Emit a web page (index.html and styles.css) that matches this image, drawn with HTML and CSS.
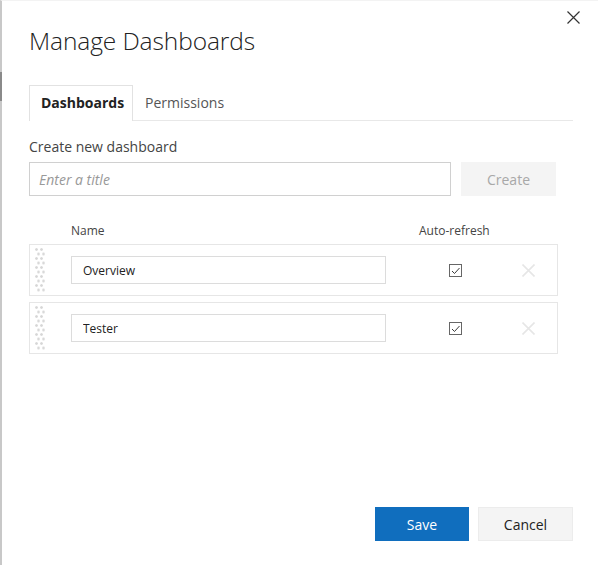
FILE: index.html
```html
<!DOCTYPE html>
<html>
<head>
<meta charset="utf-8">
<link rel="stylesheet" href="styles.css">
</head>
<body>
<div class="frame">
  <div class="scroll-thumb"></div>
  <button class="close" aria-label="Close">
    <svg width="13" height="13" viewBox="0 0 13 13"><path d="M0.5 0.5L12.5 12.5M12.5 0.5L0.5 12.5" stroke="#333" stroke-width="1.2" fill="none"/></svg>
  </button>
  <div class="dialog">
    <h1 class="title">Manage Dashboards</h1>
    <div class="tabs">
      <div class="tab active">Dashboards</div>
      <div class="tab">Permissions</div>
    </div>
    <div class="create-label">Create new dashboard</div>
    <div class="create-row">
      <input class="title-input" type="text" placeholder="Enter a title">
      <button class="btn-create">Create</button>
    </div>
    <div class="grid-head">
      <span class="col-name">Name</span>
      <span class="col-auto">Auto-refresh</span>
    </div>
    <div class="rows">
      <div class="row">
        <div class="grip"></div>
        <input class="name-input" type="text" value="Overview">
        <div class="check-cell">
          <span class="checkbox"><svg width="11" height="11" viewBox="0 0 11 11"><path d="M2 6L4.5 8.5L9.5 3" stroke="#3a3a3a" stroke-width="1" fill="none"/></svg></span>
        </div>
        <div class="del-cell">
          <svg width="13" height="13" viewBox="0 0 13 13"><path d="M0.5 0.5L12.5 12.5M12.5 0.5L0.5 12.5" stroke="#e6e6e6" stroke-width="1.6" fill="none"/></svg>
        </div>
      </div>
      <div class="row">
        <div class="grip"></div>
        <input class="name-input" type="text" value="Tester">
        <div class="check-cell">
          <span class="checkbox"><svg width="11" height="11" viewBox="0 0 11 11"><path d="M2 6L4.5 8.5L9.5 3" stroke="#3a3a3a" stroke-width="1" fill="none"/></svg></span>
        </div>
        <div class="del-cell">
          <svg width="13" height="13" viewBox="0 0 13 13"><path d="M0.5 0.5L12.5 12.5M12.5 0.5L0.5 12.5" stroke="#e6e6e6" stroke-width="1.6" fill="none"/></svg>
        </div>
      </div>
    </div>
    <div class="spacer"></div>
    <div class="footer">
      <button class="btn-save">Save</button>
      <button class="btn-cancel">Cancel</button>
    </div>
  </div>
</div>
</body>
</html>
```
FILE: styles.css
```css
* { box-sizing: border-box; }
html, body { margin: 0; padding: 0; background: #fff; }
body {
  font-family: "Open Sans", "Noto Sans", "Liberation Sans", sans-serif;
  color: #333;
  width: 598px;
  height: 565px;
  overflow: hidden;
}
.frame {
  position: relative;
  height: 565px;
  border-left: 2px solid #c8c8c8;
  border-top: 1px solid #f3f3f3;
}
.scroll-thumb {
  position: absolute;
  left: -2px;
  top: 71px;
  width: 2px;
  height: 29px;
  background: #8a8a8a;
}
.close {
  position: absolute;
  right: 18px;
  top: 10px;
  width: 13px;
  height: 13px;
  padding: 0;
  border: 0;
  background: none;
  display: flex;
}
.dialog {
  display: flex;
  flex-direction: column;
  height: 100%;
  padding: 0 25px 24px 27px;
}
.title {
  margin: 23px 0 0;
  font-weight: 300;
  font-size: 24.5px;
  line-height: 33px;
  color: #222;
  letter-spacing: -0.1px;
}
.tabs {
  display: flex;
  margin-top: 28px;
  border-bottom: 1px solid #e8e8e8;
  height: 36px;
}
.tab {
  padding: 0 11px;
  font-size: 14px;
  line-height: 34px;
  color: #555;
  border: 1px solid transparent;
  border-bottom: 0;
  margin-bottom: -1px;
}
.tab.active {
  font-weight: 700;
  color: #222;
  border-color: #e2e2e2;
  background: #fff;
  width: 104px;
  padding: 0 11px;
}
.create-label {
  margin-top: 16px;
  font-size: 14px;
  line-height: 20px;
  color: #444;
}
.create-row {
  display: flex;
  gap: 10px;
  margin-top: 5px;
}
.title-input {
  width: 422px;
  height: 34px;
  border: 1px solid #d0d0d0;
  padding: 0 9px;
  font-family: inherit;
  font-size: 14px;
  font-style: italic;
  outline: none;
}
.title-input::placeholder { color: #999; }
.btn-create {
  width: 95px;
  height: 34px;
  border: 0;
  background: #f4f4f4;
  color: #a8a8a8;
  font-family: inherit;
  font-size: 14px;
}
.grid-head {
  display: flex;
  align-items: center;
  height: 20px;
  margin-top: 24px;
  font-size: 12px;
  color: #444;
}
.col-name { margin-left: 42px; width: 348px; }
.col-auto { margin-left: 0; }
.rows {
  display: flex;
  flex-direction: column;
  gap: 6px;
  margin-top: 4px;
  width: 529px;
}
.row {
  display: flex;
  align-items: center;
  height: 52px;
  border: 1px solid #e6e6e6;
}
.grip {
  width: 10px;
  height: 45px;
  margin-left: 5px;
  background-image:
    radial-gradient(circle at 1.5px 1.5px, #d6d6d6 0.9px, transparent 1.7px),
    radial-gradient(circle at 1.5px 1.5px, #d6d6d6 0.9px, transparent 1.7px);
  background-size: 5px 9px, 5px 9px;
  background-position: 0 0, 2px 4.5px;
}
.name-input {
  margin-left: 26px;
  width: 315px;
  height: 28px;
  border: 1px solid #dcdcdc;
  padding: 0 11px;
  font-family: inherit;
  font-size: 12px;
  color: #222;
  outline: none;
}
.check-cell {
  margin-left: 63px;
  width: 13px;
  display: flex;
}
.checkbox {
  width: 13px;
  height: 13px;
  border: 1px solid #666;
  display: flex;
  align-items: center;
  justify-content: center;
  background: #fff;
}
.checkbox svg { display: block; }
.del-cell {
  margin-left: 60px;
  display: flex;
}
.spacer { flex: 1; }
.footer {
  display: flex;
  justify-content: flex-end;
  gap: 9px;
}
.btn-save {
  width: 94px;
  height: 34px;
  border: 0;
  background: #106ebe;
  color: #fff;
  font-family: inherit;
  font-size: 14px;
}
.btn-cancel {
  width: 95px;
  height: 34px;
  border: 1px solid #ececec;
  background: #f4f4f4;
  color: #222;
  font-family: inherit;
  font-size: 14px;
}
```
